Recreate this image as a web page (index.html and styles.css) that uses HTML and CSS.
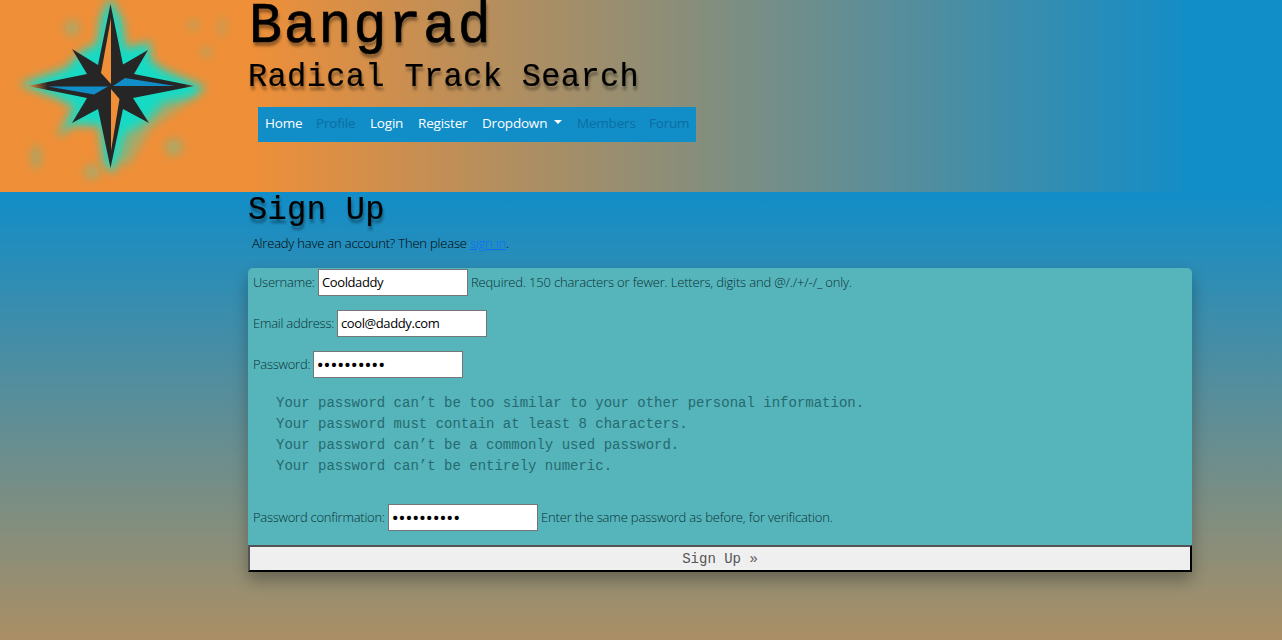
FILE: index.html
```html
<!DOCTYPE html>
<html lang="en">
<head>
<meta charset="utf-8">
<title>Bangrad</title>
<link rel="stylesheet" href="styles.css">
</head>
<body>
<header class="header">
  <svg class="logo" width="248" height="192" viewBox="0 0 248 192">
    <defs>
      <filter id="glow" x="-30%" y="-30%" width="160%" height="160%"><feGaussianBlur stdDeviation="5"/></filter>
      <linearGradient id="west"><stop offset="0" stop-color="#ef8f38"/><stop offset=".12" stop-color="#262626"/><stop offset=".94" stop-color="#262626"/><stop offset="1" stop-color="#704a29"/></linearGradient>
    </defs>
    <g filter="url(#glow)" fill="#13dac4">
      <path d="M110-2L122 20 126 48 150 42 151 61 166 71 205 87 193 98 164 102 146 122 125 134 114 173 104 164 100 126 73 125 57 137 74 107 57 98 20 84 66 68 82 51 97 44 101 17Z"/>
      <g opacity=".38"><circle cx="72" cy="28" r="7"/><circle cx="174" cy="147" r="8"/><circle cx="92" cy="172" r="7"/><ellipse cx="36" cy="157" rx="4" ry="12"/><circle cx="206" cy="52" r="4"/><circle cx="193" cy="25" r="4"/><ellipse cx="222" cy="27" rx="2" ry="10"/><path d="M158 100L190 100 150 128 128 165 116 160 125 125Z"/></g>
    </g>
    <path fill="url(#west)" d="M110.5 4L123 64.500 148 50 134 74 194 86 133 98 149 123 123 109 110.500 168 98 109 72 123 87 98 28 86 87 74 72 49 98 65Z"/>
    <path fill="#ef8f38" d="M111 18V84L101 73ZM111 89L119.500 99 111 151Z"/>
    <path fill="#118dc8" d="M113 86L125 78 175 86ZM48 86.500H108L94 94.500Z"/>
  </svg>
  <div class="masthead">
    <h1 class="brand">Bangrad</h1>
    <h2 class="heading">Radical Track Search</h2>
    <nav class="nav">
      <a class="w37">Home</a><a class="w40 off">Profile</a><a class="w34">Login</a><a class="w50">Register</a><a class="w81">Dropdown<i class="caret"></i></a><a class="w58 off">Members</a><a class="w40 off">Forum</a>
    </nav>
  </div>
</header>
<main class="main">
  <h2 class="heading">Sign Up</h2>
  <p class="intro">Already have an account? Then please <a class="link" href="#">sign in</a>.</p>
  <form class="card">
    <div class="row"><label class="l1">Username:</label><input class="field" type="text" value="Cooldaddy"><span>Required. 150 characters or fewer. Letters, digits and @/./+/-/_ only.</span></div>
    <div class="row"><label class="l2">Email address:</label><input class="field" type="text" value="cool@daddy.com"></div>
    <div class="row"><label class="l3">Password:</label><input class="field dots" type="password" value="abcdefghij"></div>
    <ul class="rules">
      <li>Your password can’t be too similar to your other personal information.</li>
      <li>Your password must contain at least 8 characters.</li>
      <li>Your password can’t be a commonly used password.</li>
      <li>Your password can’t be entirely numeric.</li>
    </ul>
    <div class="row"><label class="l4">Password confirmation:</label><input class="field dots" type="password" value="abcdefghij"><span>Enter the same password as before, for verification.</span></div>
    <button class="submit" type="button">Sign Up »</button>
  </form>
</main>
</body>
</html>
```
FILE: styles.css
```css
* { box-sizing: border-box; }
body { margin: 0; height: 640px; overflow: hidden; background: linear-gradient(#118dc8 192px, #ef8f38 841px); font: 300 13px/20px "Open Sans", sans-serif; color: #000; }
.header { height: 192px; display: flex; background: linear-gradient(90deg, #ef8f38 250px, #118dc8 1195px); }
.logo { flex: none; }
.masthead { display: flex; flex-direction: column; align-items: flex-start; }
h1, h2, p, ul { margin: 0; }
.brand, .heading { font-family: "Liberation Mono", monospace; font-weight: 400; white-space: nowrap; text-shadow: 1px 4px 3px rgba(0,0,0,.4); -webkit-text-stroke: .2px #000; }
.brand { font-size: 55px; line-height: 56px; letter-spacing: 1.8px; height: 56px; padding-left: 1px; transform: scaleY(1.04); transform-origin: 0 42px; -webkit-text-stroke-width: .6px; }
.heading { font-size: 32px; line-height: 38px; letter-spacing: .35px; height: 38px; margin-top: 3px; transform: scaleY(1.04); transform-origin: 0 28px; }
.nav { display: flex; gap: 14px; width: 438px; height: 35px; margin: 10px 0 0 10px; padding: 6px 7px 0; background: #118dc8; color: #fff; font-size: 13.5px; font-weight: 500; letter-spacing: -.2px; }
.nav a { display: block; white-space: nowrap; }
.w34 { width: 34px; } .w37 { width: 37px; } .w40 { width: 40px; } .w50 { width: 50px; } .w58 { width: 58px; } .w81 { width: 81px; }
.off { color: #0d6da1; font-weight: 400; }
.caret { display: inline-block; margin-left: 7px; vertical-align: 4px; border: 4px solid transparent; border-top-color: #fff; border-bottom: 0; }
.main { width: 944px; margin-left: 248px; }
.main > .heading { margin: 0; line-height: 38px; }
.intro { height: 38px; padding: 3px 4px 0; letter-spacing: -.2px; }
.link { color: #0d6efd; }
.card { height: 304px; border-radius: 5px; background: #55b5bb; box-shadow: 0 8px 16px rgba(0,0,0,.3); color: #0b3034; padding-top: 1px; }
.row { display: flex; align-items: center; gap: 3px; height: 27px; padding-left: 5px; margin-bottom: 14px; white-space: nowrap; }
.row label, .row span { margin-top: -2px; letter-spacing: -.16px; }
.row label { flex: none; letter-spacing: -.25px; }
.l1 { width: 62px; } .l2 { width: 81px; } .l3 { width: 57px; } .l4 { width: 132px; }
.field { width: 150px; height: 27px; border: 1px solid #767676; padding: 0 3px 2px; border-radius: 0; background: #fff; color: #000; font: 400 13px "Open Sans", sans-serif; letter-spacing: -.4px; }
.dots { font-size: 17px; letter-spacing: .4px; padding: 0 3px; font-stretch: 85%; }
.rules { list-style: none; padding: 1px 0 0 28px; height: 112px; font: 14px/21px "Liberation Mono", monospace; color: #276a70; }
.submit { display: block; width: 944px; height: 27px; padding: 0; border: 2px outset #000; background: #efefef; font: 14px/20px "Liberation Mono", monospace; color: #555; }
```
